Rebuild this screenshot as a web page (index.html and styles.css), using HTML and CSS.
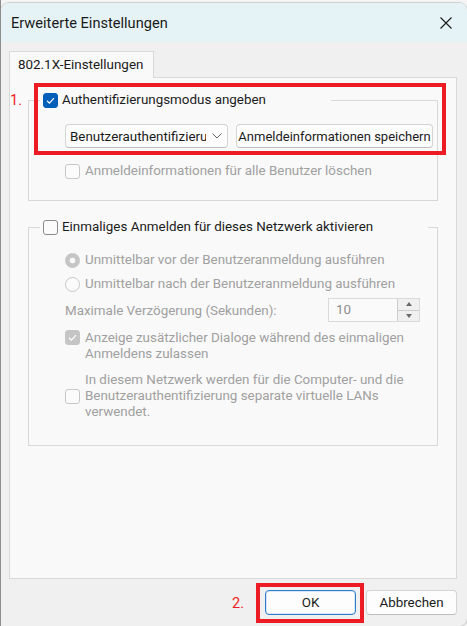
FILE: index.html
```html
<!DOCTYPE html>
<html lang="de">

<head>
    <meta charset="UTF-8">
    <meta name="viewport" content="width=device-width, initial-scale=1.0">
    <title>Erweiterte Einstellungen</title>
    <link rel="stylesheet" href="styles.css">
</head>

<body>
    <div class="screen">
        <div class="window">
            <div class="titlebar">
                <span class="title">Erweiterte Einstellungen</span>
                <svg class="close" width="12" height="12" viewBox="0 0 12 12">
                    <path d="M0.5 0.5 L11.5 11.5 M11.5 0.5 L0.5 11.5" stroke="#1a1a1a" stroke-width="1.1" fill="none" />
                </svg>
            </div>

            <div class="content">
                <div class="tabs">
                    <div class="tab">802.1X-Einstellungen</div>
                </div>

                <div class="panel">
                    <fieldset class="group">
                        <legend class="legend first">
                            <span class="check on">
                                <svg width="13" height="13" viewBox="0 0 13 13">
                                    <path d="M3 6.8 L5.4 9.1 L10 4.2" stroke="#fff" stroke-width="1.2" fill="none" />
                                </svg>
                            </span>
                            <span>Authentifizierungsmodus angeben</span>
                        </legend>
                        <div class="group-body">
                            <div class="row">
                                <div class="combo">
                                    <span class="combo-text">Benutzerauthentifizierung</span>
                                    <svg width="10" height="6" viewBox="0 0 10 6">
                                        <path d="M0.5 0.5 L5 5 L9.5 0.5" stroke="#5f5f5f" stroke-width="1" fill="none" />
                                    </svg>
                                </div>
                                <div class="btn wide">Anmeldeinformationen speichern</div>
                            </div>
                            <div class="option disabled spaced">
                                <span class="check"></span>
                                <span>Anmeldeinformationen für alle Benutzer löschen</span>
                            </div>
                        </div>
                    </fieldset>

                    <fieldset class="group second">
                        <legend class="legend">
                            <span class="check"></span>
                            <span>Einmaliges Anmelden für dieses Netzwerk aktivieren</span>
                        </legend>
                        <div class="group-body">
                            <div class="option disabled">
                                <span class="radio on"></span>
                                <span>Unmittelbar vor der Benutzeranmeldung ausführen</span>
                            </div>
                            <div class="option disabled radio-gap">
                                <span class="radio"></span>
                                <span>Unmittelbar nach der Benutzeranmeldung ausführen</span>
                            </div>
                            <div class="delay disabled">
                                <span>Maximale Verzögerung (Sekunden):</span>
                                <div class="spin">
                                    <span class="spin-value">10</span>
                                    <div class="spin-buttons">
                                        <span class="spin-up"></span>
                                        <span class="spin-down"></span>
                                    </div>
                                </div>
                            </div>
                            <div class="option disabled top">
                                <span class="check on gray">
                                    <svg width="13" height="13" viewBox="0 0 13 13">
                                        <path d="M3 6.8 L5.4 9.1 L10 4.2" stroke="#fff" stroke-width="1.2" fill="none" />
                                    </svg>
                                </span>
                                <span>Anzeige zusätzlicher Dialoge während des einmaligen<br>Anmeldens zulassen</span>
                            </div>
                            <div class="option disabled last">
                                <span class="check"></span>
                                <span>In diesem Netzwerk werden für die Computer- und die<br>Benutzerauthentifizierung separate virtuelle LANs<br>verwendet.</span>
                            </div>
                        </div>
                    </fieldset>
                </div>

                <div class="actions">
                    <div class="btn default">OK</div>
                    <div class="btn">Abbrechen</div>
                </div>
            </div>
        </div>

        <!-- Markierungen aus der Anleitung -->
        <div class="mark mark-one"></div>
        <span class="mark-label label-one">1.</span>
        <div class="mark mark-two"></div>
        <span class="mark-label label-two">2.</span>
    </div>
</body>

</html>
```

FILE: styles.css
```css
* {
    box-sizing: border-box;
}

body {
    margin: 0;
    font-family: "Segoe UI", Roboto, "Noto Sans", sans-serif;
    font-size: 13.4px;
    color: #1b1b1b;
}

.screen {
    width: 467px;
    height: 626px;
    padding-top: 3px;
    border-left: 1px solid #8d8d8d;
    background: #f4f4f4;
    overflow: hidden;

    position: relative;
}

.window {
    height: 623px;
    display: flex;
    flex-direction: column;

    background: #f0f0f0;
    border-radius: 8px 8px 8px 0;
    box-shadow: 0 0 0 1px #cfcfcf;
    overflow: hidden;
}

.titlebar {
    height: 39px;
    flex: none;
    display: flex;
    align-items: center;
    justify-content: space-between;
    padding: 0 15px 0 10px;

    background: #e6f3f6;
}

.title {
    font-size: 14.6px;
    color: #1a1a1a;
}

.content {
    flex: 1;
    display: flex;
    flex-direction: column;
    padding: 9px 10px 0 8px;
}

.tabs {
    display: flex;
    height: 26px;
}

.tab {
    width: 145px;
    height: 27px;
    margin-bottom: -1px;
    padding: 0 8px;

    border: 1px solid #d9d9d9;
    border-bottom: none;
    background: #f9f9f9;

    line-height: 25px;
    white-space: nowrap;

    position: relative;
    z-index: 1;
}

.panel {
    height: 502px;
    padding: 14px 18px 0 18px;

    border: 1px solid #d9d9d9;
    background: #f9f9f9;
}

.group {
    margin: 0;
    padding: 16px 0 21px 11px;
    border: 1px solid #d8d8d8;
}

.group.second {
    margin-top: 18px;
    padding-top: 17px;
    padding-bottom: 25px;
}

.legend {
    width: 388px;
    padding: 0 3px;
    display: flex;
    align-items: center;
    gap: 4px;
    line-height: 16px;
    white-space: nowrap;
}

.legend.first {
    width: 291px;
}

.group-body {
    padding-left: 25px;
}

.row {
    display: flex;
    gap: 8px;
    height: 24px;
}

.combo {
    width: 163px;
    height: 24px;
    display: flex;
    align-items: center;
    gap: 6px;
    padding: 0 5px 0 4px;

    border: 1px solid #d4d4d4;
    border-bottom-color: #bdbdbd;
    border-radius: 4px;
    background: #fdfdfd;
}

.combo-text {
    flex: 1;
    overflow: hidden;
    white-space: nowrap;
}

.combo svg {
    flex: none;
}

.btn {
    width: 91px;
    height: 25px;
    display: flex;
    align-items: center;
    justify-content: center;

    border: 1px solid #d4d4d4;
    border-bottom-color: #bdbdbd;
    border-radius: 4px;
    background: #fdfdfd;

    white-space: nowrap;
}

.btn.wide {
    width: 197px;
    height: 24px;
    font-size: 13px;
}

.btn.default {
    border-color: #2f7ccb;
    box-shadow: inset 0 0 0 1px #d6e6f5;
}

.option {
    display: flex;
    align-items: center;
    gap: 5px;
    line-height: 16px;
    white-space: nowrap;
}

.option.spaced {
    margin-top: 15px;
}

.option.radio-gap {
    margin-top: 8px;
}

.option.top {
    align-items: flex-start;
    margin-top: 8px;
}

.option.last {
    margin-top: 10px;
}

.disabled {
    color: #a0a0a0;
}

.check {
    width: 15px;
    height: 15px;
    flex: none;
    display: flex;
    align-items: center;
    justify-content: center;

    border: 1px solid #8a8a8a;
    border-radius: 3px;
    background: #fbfbfb;
}

.disabled .check {
    border-color: #c8c8c8;
}

.check.on {
    border-color: #005fb8;
    background: #005fb8;
}

.check.gray,
.disabled .check.gray {
    border-color: #c5c5c5;
    background: #c5c5c5;
}

.radio {
    width: 15px;
    height: 15px;
    flex: none;

    border: 1px solid #c8c8c8;
    border-radius: 50%;
    background: #fbfbfb;
}

.radio.on {
    border-color: #c5c5c5;
    background: radial-gradient(circle, #fafafa 0 2.6px, #c5c5c5 3.2px);
}

.delay {
    display: grid;
    grid-template-columns: 263px 92px;
    align-items: center;
    margin-top: 6px;
    white-space: nowrap;
}

.spin {
    height: 24px;
    display: flex;

    border: 1px solid #dadada;
    background: #fafafa;
}

.spin-value {
    flex: 1;
    padding-left: 7px;
    line-height: 22px;
    color: #8c8c8c;
}

.spin-buttons {
    width: 22px;
    display: flex;
    flex-direction: column;
    border-left: 1px solid #cdcdcd;
    background: #f0f0f0;
}

.spin-up,
.spin-down {
    flex: 1;
    display: flex;
    align-items: center;
    justify-content: center;
}

.spin-up {
    border-bottom: 1px solid #cdcdcd;
}

.spin-up::before {
    content: "";
    border: 3px solid transparent;
    border-top: none;
    border-bottom: 4px solid #6a6a6a;
}

.spin-down::before {
    content: "";
    border: 3px solid transparent;
    border-bottom: none;
    border-top: 4px solid #6a6a6a;
}

.actions {
    display: flex;
    justify-content: flex-end;
    gap: 10px;
    margin-top: 11px;
}

.mark {
    position: absolute;
    border: 4px solid #ed1c24;
}

.mark-one {
    left: 33px;
    top: 83px;
    width: 412px;
    height: 72px;
}

.mark-two {
    left: 255px;
    top: 583px;
    width: 108px;
    height: 40px;
}

.mark-label {
    position: absolute;
    color: #ed1c24;
    font-size: 14.5px;
    line-height: 16px;
}

.label-one {
    left: 9px;
    top: 93px;
}

.label-two {
    left: 231px;
    top: 596px;
}
```
